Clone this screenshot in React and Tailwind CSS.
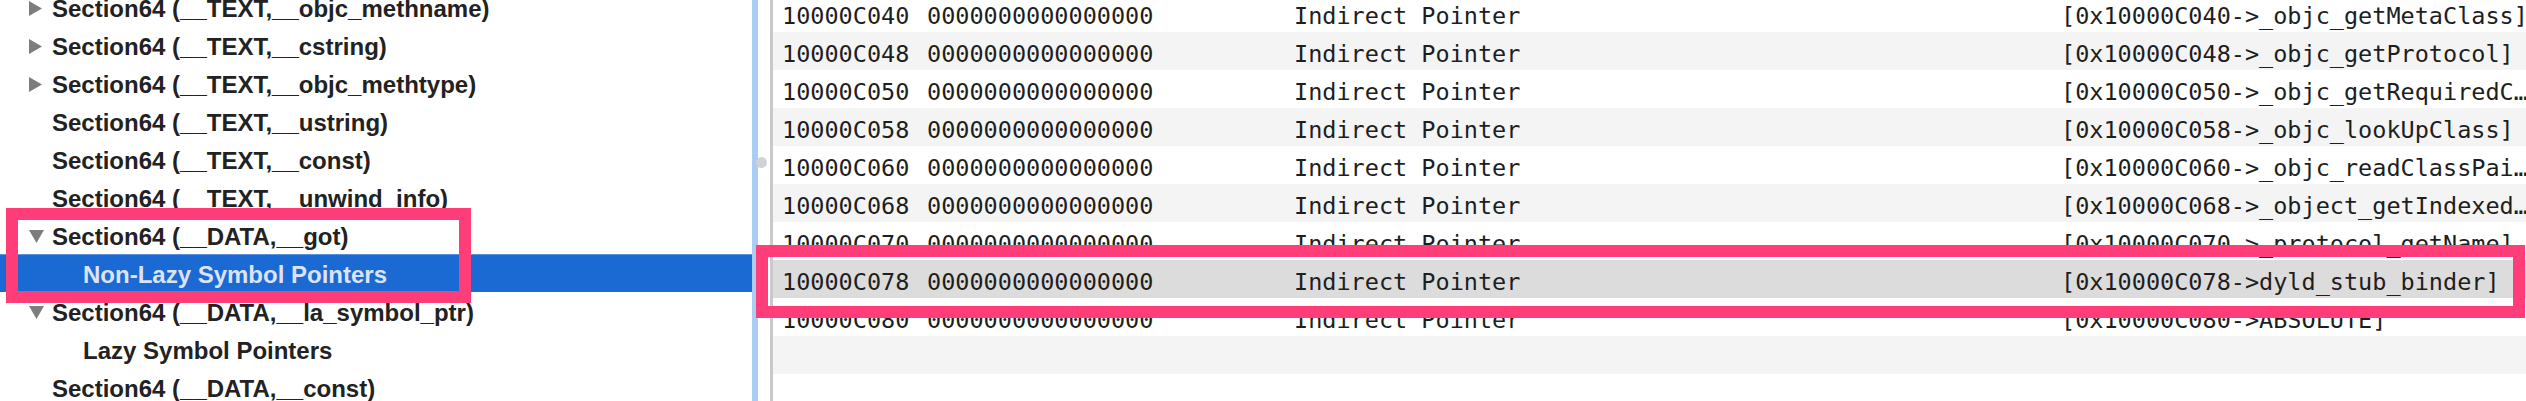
import React from "react";

const treeRows = [
  { t: "Section64 (__TEXT,__objc_methname)", tri: "right" },
  { t: "Section64 (__TEXT,__cstring)", tri: "right" },
  { t: "Section64 (__TEXT,__objc_methtype)", tri: "right" },
  { t: "Section64 (__TEXT,__ustring)" },
  { t: "Section64 (__TEXT,__const)" },
  { t: "Section64 (__TEXT,__unwind_info)" },
  { t: "Section64 (__DATA,__got)", tri: "down" },
  { t: "Non-Lazy Symbol Pointers", child: true, sel: true },
  { t: "Section64 (__DATA,__la_symbol_ptr)", tri: "down" },
  { t: "Lazy Symbol Pointers", child: true },
  { t: "Section64 (__DATA,__const)" },
];

const tableRows = [
  ["10000C040", "[0x10000C040->_objc_getMetaClass]"],
  ["10000C048", "[0x10000C048->_objc_getProtocol]"],
  ["10000C050", "[0x10000C050->_objc_getRequiredC\u2026"],
  ["10000C058", "[0x10000C058->_objc_lookUpClass]"],
  ["10000C060", "[0x10000C060->_objc_readClassPai\u2026"],
  ["10000C068", "[0x10000C068->_object_getIndexed\u2026"],
  ["10000C070", "[0x10000C070->_protocol_getName]"],
  ["10000C078", "[0x10000C078->dyld_stub_binder]"],
  ["10000C080", "[0x10000C080->ABSOLUTE]"],
  null,
  null,
];

function Tri({ dir }) {
  if (dir === "down")
    return (
      <svg width="15" height="13" viewBox="0 0 15 13">
        <polygon points="0,0 15,0 7.5,13" fill="#7d7d7d" />
      </svg>
    );
  return (
    <svg width="13" height="15" viewBox="0 0 13 15">
      <polygon points="0,0 13,7.5 0,15" fill="#7d7d7d" />
    </svg>
  );
}

export default function App() {
  return (
    <div className="relative flex w-[2526px] h-[401px] overflow-hidden bg-white">
      {/* Left outline pane */}
      <div className="w-[752px] h-full overflow-hidden shrink-0">
        <div className="-mt-[12px] flex flex-col">
          {treeRows.map((r, i) => (
            <div
              key={i}
              className={
                "flex items-center h-[38px] pt-[3px] " +
                (r.sel ? "bg-[#1b6ad3] border-t border-[#5b92dc]" : "")
              }
            >
              {r.child ? (
                <div className="w-[83px] shrink-0" />
              ) : (
                <div className="w-[52px] shrink-0 pl-[29px] flex items-center">
                  {r.tri ? <Tri dir={r.tri} /> : null}
                </div>
              )}
              <span
                className={
                  "text-[24px] font-bold whitespace-nowrap leading-none " +
                  (r.sel ? "text-[#dde3f6]" : "text-[#222222]")
                }
                style={{ fontFamily: '"Liberation Sans", Arial, sans-serif' }}
              >
                {r.t}
              </span>
            </div>
          ))}
        </div>
      </div>

      {/* Divider */}
      <div className="w-[6px] h-full bg-[#a9cdf4] shrink-0" />
      <div className="relative w-[12px] h-full bg-white shrink-0">
        <div className="absolute left-[-2px] top-[157px] w-[11px] h-[11px] rounded-full bg-[#d2d2d2]" />
      </div>
      <div className="w-[3px] h-full bg-[#c9c9c9] shrink-0" />

      {/* Right table */}
      <div className="flex-1 h-full overflow-hidden">
        <div
          className="-mt-[6px] flex flex-col text-[23.5px] text-[#1e1e1e]"
          style={{ fontFamily: '"DejaVu Sans Mono", Menlo, monospace' }}
        >
          {tableRows.map((r, i) => (
            <div
              key={i}
              className={
                "flex items-center h-[38px] pl-[9px] pt-[7px] whitespace-nowrap leading-none " +
                (i === 7 ? "bg-[#dcdcdc]" : i % 2 === 1 ? "bg-[#f4f4f4]" : "bg-white")
              }
            >
              {r ? (
                <>
                  <span className="w-[145px] shrink-0">{r[0]}</span>
                  <span className="w-[367px] shrink-0">0000000000000000</span>
                  <span className="w-[767px] shrink-0">Indirect Pointer</span>
                  <span className="shrink-0">{r[1]}</span>
                </>
              ) : null}
            </div>
          ))}
        </div>
      </div>

      {/* Annotation boxes */}
      <div className="absolute left-[6px] top-[208px] w-[465px] h-[95px] border-[12px] border-[#ff3d78]" />
      <div className="absolute left-[756px] top-[245px] w-[1769px] h-[73px] border-[12px] border-[#ff3d78]" />
    </div>
  );
}
